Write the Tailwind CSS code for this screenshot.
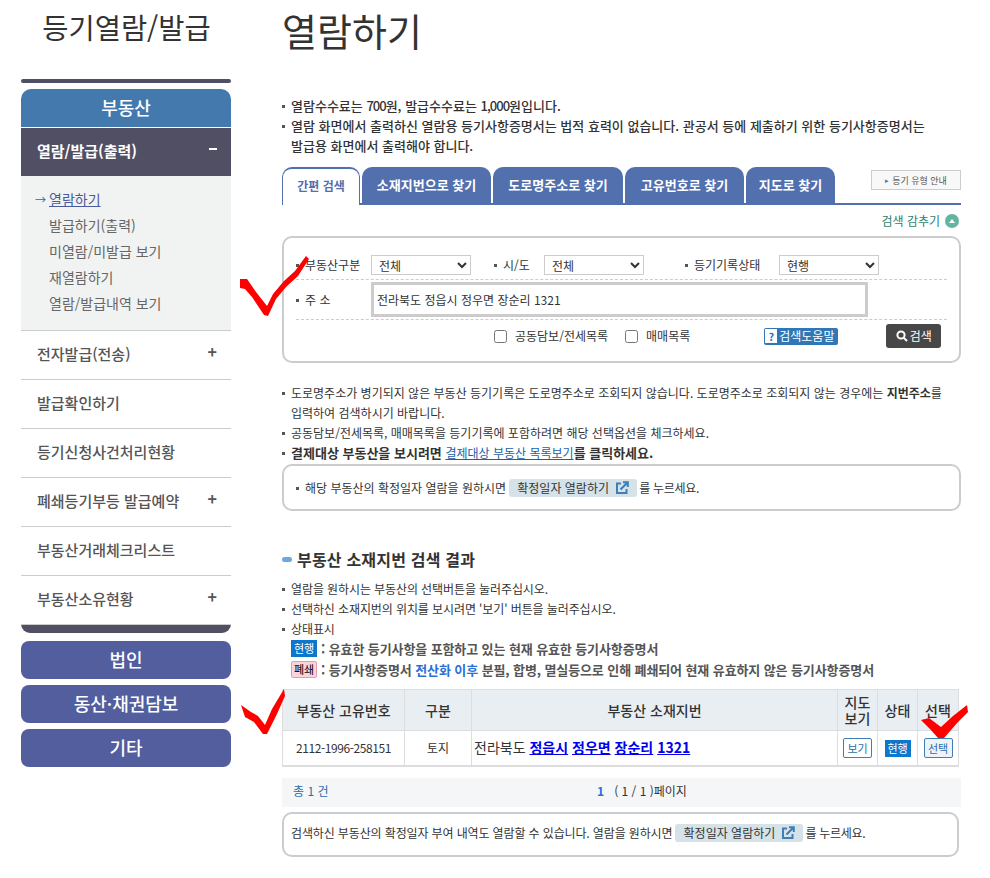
<!DOCTYPE html>
<html lang="ko">
<head>
    <meta charset="UTF-8">
    <title>열람하기</title>
    <script src="https://cdn.jsdelivr.net/npm/@tailwindcss/browser@4"></script>
</head>
<body class="bg-white font-['Noto_Sans_CJK_KR','Noto_Sans',sans-serif] text-[#333]">
<div class="relative w-[990px] h-[878px] overflow-hidden">
    <div class="flex">
        <!-- left menu -->
        <aside class="ml-[21px] w-[210px] shrink-0">
            <h2 class="h-[79px] pt-[6px] pl-[1px] text-center text-[28.5px] leading-[42px] text-[#333]">등기열람/발급</h2>
            <div class="h-[4px] rounded-[2px] bg-[#504f63]"></div>
            <div class="mt-[6px] h-[38px] rounded-t-[10px] bg-[#4479ae] text-center text-[18px] leading-[36px] font-medium text-white">부동산</div>
            <div class="mt-px flex h-[48px] items-center justify-between bg-[#504f63] pb-[2px] pl-[16px] pr-[14px] text-[15px] font-bold text-white">
                <span>열람/발급(출력)</span><span class="-mt-[4px] h-[2px] w-[8px] bg-white"></span>
            </div>
            <ul class="h-[154px] bg-[#f1f3f2] pt-[10px] text-[14px] leading-[26px] text-[#666]">
                <li class="flex h-[26px] pl-[14px] text-[#4a5a9e]"><span class="w-[14px] text-[11px]">→</span><span class="underline">열람하기</span></li>
                <li class="h-[26px] pl-[28px]">발급하기(출력)</li>
                <li class="h-[26px] pl-[28px]">미열람/미발급 보기</li>
                <li class="h-[26px] pl-[28px]">재열람하기</li>
                <li class="h-[26px] pl-[28px]">열람/발급내역 보기</li>
            </ul>
            <ul class="text-[15px] font-medium text-[#555]">
                <li class="flex h-[49px] items-center justify-between border-t border-[#ccc] pb-[2px] pl-[16px] pr-[14px]"><span>전자발급(전송)</span><span class="-mt-[6px] text-[16px] font-bold">+</span></li>
                <li class="flex h-[49px] items-center border-t border-[#ccc] pb-[2px] pl-[16px]">발급확인하기</li>
                <li class="flex h-[49px] items-center border-t border-[#ccc] pb-[2px] pl-[16px]">등기신청사건처리현황</li>
                <li class="flex h-[49px] items-center justify-between border-t border-[#ccc] pb-[2px] pl-[16px] pr-[14px]"><span>폐쇄등기부등 발급예약</span><span class="-mt-[6px] text-[16px] font-bold">+</span></li>
                <li class="flex h-[49px] items-center border-t border-[#ccc] pb-[2px] pl-[16px]">부동산거래체크리스트</li>
                <li class="flex h-[49px] items-center justify-between border-t border-[#ccc] pb-[2px] pl-[16px] pr-[14px]"><span>부동산소유현황</span><span class="-mt-[6px] text-[16px] font-bold">+</span></li>
            </ul>
            <div class="h-[9px] rounded-b-[10px] border-t border-[#ccc] bg-[#504f63]"></div>
            <div class="mt-[8px] flex flex-col gap-[6px] text-center text-[18px] leading-[37px] font-medium text-white">
                <div class="h-[38px] rounded-[8px] bg-[#525e9d]">법인</div>
                <div class="h-[38px] rounded-[8px] bg-[#525e9d]">동산·채권담보</div>
                <div class="h-[38px] rounded-[8px] bg-[#525e9d]">기타</div>
            </div>
        </aside>

        <!-- content -->
        <main class="ml-[51px] w-[679px] shrink-0 text-[12px] text-[#333]">
            <h1 class="h-[96px] pt-[3px] text-[38px] leading-[54px] text-[#333]">열람하기</h1>
            <ul class="h-[60px] text-[13px] leading-[20px] font-medium">
                <li><span class="mr-[6px] inline-block h-[3px] w-[3px] bg-[#555] align-[3px]"></span>열람수수료는 <span class="tracking-[-1px]">700</span>원, 발급수수료는 <span class="tracking-[-1px]">1,000</span>원입니다.</li>
                <li><span class="mr-[6px] inline-block h-[3px] w-[3px] bg-[#555] align-[3px]"></span>열람 화면에서 출력하신 열람용 등기사항증명서는 법적 효력이 없습니다. 관공서 등에 제출하기 위한 등기사항증명서는<br><span class="pl-[9px]">발급용 화면에서 출력해야 합니다.</span></li>
            </ul>

            <div class="relative mt-[11px] flex h-[38px] text-center text-[13px] leading-[36px] font-bold text-white">
                <div class="absolute inset-x-0 bottom-0 h-[2px] bg-[#526fae]"></div>
                <div class="z-10 h-[38px] w-[78px] rounded-t-[10px] border-x border-t-2 border-[#526fae] bg-white text-[12px] leading-[34px] text-[#526fae]">간편 검색</div>
                <div class="ml-[2px] w-[129px] rounded-t-[10px] bg-[#526fae]">소재지번으로 찾기</div>
                <div class="ml-[2px] w-[130px] rounded-t-[10px] bg-[#526fae]">도로명주소로 찾기</div>
                <div class="ml-[2px] w-[119px] rounded-t-[10px] bg-[#526fae]">고유번호로 찾기</div>
                <div class="ml-[2px] w-[89px] rounded-t-[10px] bg-[#526fae]">지도로 찾기</div>
                <div class="absolute right-0 top-[3px] flex h-[20px] w-[90px] items-center justify-center gap-[3px] border border-[#ccc] bg-[#f8f8f8] text-[9px] leading-none font-normal text-[#555]"><span class="text-[7px] text-[#4479ae]">▸</span>등기 유형 안내</div>
            </div>
            <div class="flex h-[31px] items-center justify-end gap-[5px] pr-[2px] text-[12px] text-[#2f7d6d]">
                <span>검색 감추기</span>
                <span class="flex h-[14px] w-[14px] items-center justify-center rounded-full bg-[#63b5a3]"><span class="h-0 w-0 border-x-[3px] border-b-[4px] border-x-transparent border-b-white"></span></span>
            </div>

            <!-- search box -->
            <div class="h-[127px] rounded-[10px] border-2 border-[#ccc] px-[12px] text-[12px]">
                <div class="flex h-[42px] items-end border-b border-dashed border-[#ccc] pb-[4px]">
                    <span class="w-[75px] -translate-y-px"><span class="mr-[6px] inline-block h-[3px] w-[3px] bg-[#555] align-[3px]"></span>부동산구분</span>
                    <select class="h-[20px] w-[100px] border border-[#ccc] bg-white pl-[3px] text-[12px]"><option>전체</option></select>
                    <span class="ml-[23px] w-[50px] -translate-y-px"><span class="mr-[6px] inline-block h-[3px] w-[3px] bg-[#555] align-[3px]"></span>시/도</span>
                    <select class="h-[20px] w-[100px] border border-[#ccc] bg-white pl-[3px] text-[12px]"><option>전체</option></select>
                    <span class="ml-[41px] w-[94px] -translate-y-px"><span class="mr-[6px] inline-block h-[3px] w-[3px] bg-[#555] align-[3px]"></span>등기기록상태</span>
                    <select class="h-[20px] w-[100px] border border-[#ccc] bg-white pl-[3px] text-[12px]"><option>현행</option></select>
                </div>
                <div class="flex h-[40px] items-center border-b border-dashed border-[#ccc]">
                    <span class="w-[75px]"><span class="mr-[6px] inline-block h-[3px] w-[3px] bg-[#555] align-[3px]"></span>주 소</span>
                    <div class="h-[35px] w-[497px] border-[3px] border-[#ccc] pl-[3px] leading-[30px]">전라북도 정읍시 정우면 장순리 1321</div>
                </div>
                <div class="flex h-[30px] items-center pt-[2px]">
                    <input type="checkbox" class="ml-[198px] h-[13px] w-[13px]">
                    <span class="ml-[8px]">공동담보/전세목록</span>
                    <input type="checkbox" class="ml-[17px] h-[13px] w-[13px]">
                    <span class="ml-[8px]">매매목록</span>
                    <span class="ml-[74px] flex h-[17px] w-[74px] items-center gap-[2px] rounded-[2px] bg-[#2f78b5] pl-[1px] text-[12px] text-white"><span class="flex h-[14px] w-[12px] items-center justify-center bg-white text-[11px] font-bold text-[#2f78b5]">?</span>검색도움말</span>
                    <span class="ml-[48px] flex h-[24px] w-[55px] items-center justify-center gap-[2px] rounded-[3px] bg-[#474747] text-white">
                        <svg width="12" height="12" viewBox="0 0 12 12" fill="none" stroke="white" stroke-width="2"><circle cx="5" cy="5" r="3.6"/><path d="M7.6 7.6 11 11"/></svg>검색
                    </span>
                </div>
            </div>

            <ul class="mt-[20px] text-[12px] leading-[20px]">
                <li><span class="mr-[6px] inline-block h-[3px] w-[3px] bg-[#555] align-[3px]"></span>도로명주소가 병기되지 않은 부동산 등기기록은 도로명주소로 조회되지 않습니다. 도로명주소로 조회되지 않는 경우에는 <b>지번주소</b>를<br><span class="pl-[9px]">입력하여 검색하시기 바랍니다.</span></li>
                <li><span class="mr-[6px] inline-block h-[3px] w-[3px] bg-[#555] align-[3px]"></span>공동담보/전세목록, 매매목록을 등기기록에 포함하려면 해당 선택옵션을 체크하세요.</li>
                <li class="text-[13px] font-bold"><span class="mr-[6px] inline-block h-[3px] w-[3px] bg-[#555] align-[3px]"></span>결제대상 부동산을 보시려면 <a class="text-[12px] font-normal text-[#1b5fa8] underline">결제대상 부동산 목록보기</a>를 클릭하세요.</li>
            </ul>
            <div class="mt-[1px] flex h-[47px] items-center rounded-[10px] border-2 border-[#ccc] pl-[12px] text-[12px]">
                <span><span class="mr-[6px] inline-block h-[3px] w-[3px] bg-[#555] align-[3px]"></span>해당 부동산의 확정일자 열람을 원하시면</span>
                <span class="ml-[3px] flex h-[18px] w-[128px] items-center justify-center gap-[6px] rounded-[3px] bg-[#d5e2e8]">확정일자 열람하기
                    <svg width="14" height="14" viewBox="0 0 14 14" fill="none" stroke="#3f7fb5" stroke-width="2"><path d="M6 2.5H2v9.500h9.500V8"/><path d="M5.500 8.500 12.500 1.500M8 1.200h4.800V6"/></svg>
                </span>
                <span class="ml-[2px] tracking-[-0.3px]">를 누르세요.</span>
            </div>

            <h3 class="mt-[35px] flex h-[26px] items-center text-[16px] font-bold tracking-[0.2px] text-[#333]"><span class="mr-[5px] h-[5px] w-[10px] rounded-full bg-[#6da8dc]"></span>부동산 소재지번 검색 결과</h3>
            <ul class="mt-[7px] text-[12px] leading-[20px] tracking-[-0.1px]">
                <li><span class="mr-[6px] inline-block h-[3px] w-[3px] bg-[#555] align-[3px]"></span>열람을 원하시는 부동산의 선택버튼을 눌러주십시오.</li>
                <li><span class="mr-[6px] inline-block h-[3px] w-[3px] bg-[#555] align-[3px]"></span>선택하신 소재지번의 위치를 보시려면 '보기' 버튼을 눌러주십시오.</li>
                <li><span class="mr-[6px] inline-block h-[3px] w-[3px] bg-[#555] align-[3px]"></span>상태표시</li>
                <li class="-mt-px flex h-[21px] items-center pl-[9px] text-[13px] font-bold text-[#555]"><span class="mr-[4px] h-[17px] w-[26px] bg-[#0d77cb] text-center text-[11px] leading-[17px] font-normal text-white">현행</span>: 유효한 등기사항을 포함하고 있는 현재 유효한 등기사항증명서</li>
                <li class="flex h-[21px] items-center pl-[9px] text-[13px] font-bold text-[#555]"><span class="mr-[4px] h-[17px] w-[26px] rounded-[2px] border border-[#e99aa8] bg-[#fbd3da] text-center text-[11px] leading-[15px] font-normal text-black">폐쇄</span>: 등기사항증명서&nbsp;<span class="text-[#2a6fd6]">전산화 이후</span>&nbsp;분필, 합병, 멸실등으로 인해 폐쇄되어 현재 유효하지 않은 등기사항증명서</li>
            </ul>

            <table class="mt-[9px] w-[676px] table-fixed border-collapse border-y border-b-2 border-[#ddd] text-center text-[12px]">
                <thead class="bg-[#e9eef2] text-[14px] text-[#333]">
                    <tr class="h-[41px] leading-[16px]">
                        <th class="w-[122px] border border-[#ddd] font-medium">부동산 고유번호</th>
                        <th class="w-[67px] border border-[#ddd] font-medium">구분</th>
                        <th class="w-[366px] border border-[#ddd] font-medium">부동산 소재지번</th>
                        <th class="w-[40px] border border-[#ddd] font-medium">지도 보기</th>
                        <th class="w-[40px] border border-[#ddd] font-medium">상태</th>
                        <th class="w-[41px] border border-[#ddd] font-medium">선택</th>
                    </tr>
                </thead>
                <tbody>
                    <tr class="h-[35px]">
                        <td class="border border-[#ddd] tracking-[-0.4px]">2112-1996-258151</td>
                        <td class="border border-[#ddd]">토지</td>
                        <td class="border border-[#ddd] pl-[2px] text-left text-[14px]">전라북도 <a class="font-bold text-[#0000ee] underline">정읍시</a> <a class="font-bold text-[#0000ee] underline">정우면</a> <a class="font-bold text-[#0000ee] underline">장순리</a> <a class="font-bold text-[#0000ee] underline">1321</a></td>
                        <td class="border border-[#ddd]"><span class="inline-block h-[20px] w-[29px] rounded-[2px] border border-[#3f7fb5] text-[11px] leading-[18px] text-[#2b6ea8]">보기</span></td>
                        <td class="border border-[#ddd]"><span class="inline-block h-[17px] w-[26px] bg-[#0d77cb] text-[11px] leading-[17px] text-white">현행</span></td>
                        <td class="border border-[#ddd]"><span class="inline-block h-[20px] w-[29px] rounded-[2px] border border-[#3f7fb5] bg-[#eef3f8] text-[11px] leading-[18px] text-[#2b6ea8]">선택</span></td>
                    </tr>
                </tbody>
            </table>

            <div class="relative mt-[11px] flex h-[29px] items-center bg-[#f5f6f8] pb-[3px] pl-[11px] text-[12px]">
                <span class="text-[#2b6ea8]">총 1 건</span>
                <span class="absolute left-[315px]"><b class="text-[#2a6fd6]">1</b>&nbsp;&nbsp;&nbsp;( 1 / 1 )페이지</span>
            </div>
            <div class="mt-[5px] flex h-[45px] w-[677px] items-center rounded-[10px] border-2 border-[#ccc] pb-[2px] pl-[7px] text-[12px]">
                <span class="tracking-[-0.13px]">검색하신 부동산의 확정일자 부여 내역도 열람할 수 있습니다. 열람을 원하시면</span>
                <span class="ml-[3px] flex h-[18px] w-[128px] items-center justify-center gap-[6px] rounded-[3px] bg-[#d5e2e8]">확정일자 열람하기
                    <svg width="14" height="14" viewBox="0 0 14 14" fill="none" stroke="#3f7fb5" stroke-width="2"><path d="M6 2.500H2v9.500h9.500V8"/><path d="M5.500 8.500 12.500 1.500M8 1.200h4.800V6"/></svg>
                </span>
                <span class="ml-[2px] tracking-[-0.3px]">를 누르세요.</span>
            </div>
        </main>
    </div>

    <!-- red check marks drawn over the page -->
    <svg class="absolute left-0 top-0" width="990" height="878" fill="#f00" stroke="none">
        <path d="M240 279 L247 279 L256 292 L267 306 L273 294 L284 281 L295 271 L306 256 L309 259 L298 276 L286 287 L276 299 L268 316 L264 315 L252 297 L245 289 L240 288 Z"/>
        <path d="M241 705 L251 712 L258 716 L265 725 L272 709 L284 689 L285 696 L277 714 L267 734 L263 734 L254 722 L245 717 Z"/>
        <path d="M921 720 L929 718 L941 727 L953 716 L967 705 L968 712 L958 722 L944 738 L938 738 L930 729 Z"/>
    </svg>
</div>
</body>
</html>
